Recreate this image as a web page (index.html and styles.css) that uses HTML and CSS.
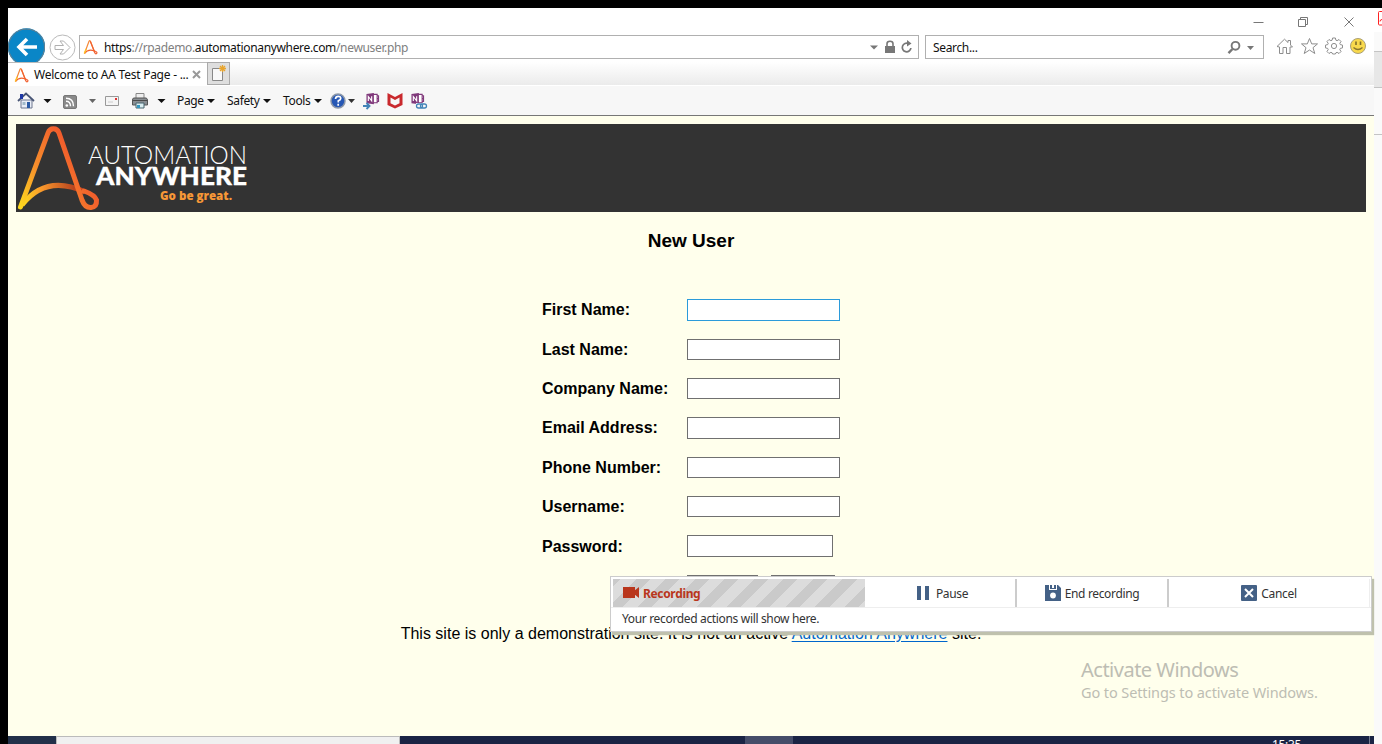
FILE: index.html
```html
<!DOCTYPE html>
<html lang="en">
<head>
<meta charset="utf-8">
<title>New User</title>
<link rel="stylesheet" href="styles.css">
</head>
<body>
<svg class="defs" width="0" height="0">
  <defs>
    <linearGradient id="flame" gradientUnits="userSpaceOnUse" x1="0" y1="84" x2="72" y2="42">
      <stop offset="0" stop-color="#ffe11c"/><stop offset=".45" stop-color="#f7902c"/><stop offset="1" stop-color="#f0532c"/>
    </linearGradient>
    <linearGradient id="arc" gradientUnits="userSpaceOnUse" x1="5" y1="80" x2="82" y2="70">
      <stop offset="0" stop-color="#ffe01e"/><stop offset=".3" stop-color="#f8962c"/><stop offset=".7" stop-color="#b8451f"/><stop offset="1" stop-color="#f4562c"/>
    </linearGradient>
    <symbol id="aa" viewBox="0 0 16 16">
      <path d="M1.500 14.500 6 2.200Q6.700 1 7.400 2.200L11.500 13" fill="none" stroke="#f58a3c" stroke-width="1.200"/>
      <path d="M7.300 2.200 11.400 12.500M1.500 14.500Q5 9.800 11 11.800Q15 13 13.600 14.600Q12 15.500 11 11.500" fill="none" stroke="#f2602f" stroke-width="1.200"/>
      <path d="M1.300 14.600 3.200 10" stroke="#ffc526" stroke-width="1.400"/>
    </symbol>
    <symbol id="onenote" viewBox="0 0 15 14">
      <path d="M7 1.500h5.500v9H7M12.500 3H14v6h-1.500M12 6h2" fill="#fff" stroke="#80397b" stroke-width="1.200"/>
      <path d="M1 1 9 0v12L1 11z" fill="#80397b"/>
      <path d="M3 8.500V3.800l3.600 4.700V3.500" fill="none" stroke="#fff" stroke-width="1.200"/>
    </symbol>
  </defs>
</svg>
<div class="screen">
  <div class="window">
    <div class="captions">
      <svg width="118" height="14"><path d="M5.500 7.500h10" stroke="#777"/><path d="M50.500 4.500h7v7h-7zM52.500 4V2.500h7v7H58" fill="none" stroke="#777"/><path d="m96.500 2.500 9 9m0-9-9 9" stroke="#777"/></svg>
    </div>
    <div class="nav">
      <svg class="back" width="38" height="35" viewBox="0 0 38 35"><circle cx="19.500" cy="19" r="18.700" fill="#0a86c7"/><circle cx="19.500" cy="19" r="18" fill="none" stroke="#6a7f8c"/><path d="M30 19H13M20 11l-8 8 8 8" fill="none" stroke="#fff" stroke-width="3.600"/></svg>
      <svg class="forward" width="27" height="27" viewBox="0 0 27 27"><circle cx="13.500" cy="13.500" r="12.500" fill="#fff" stroke="#bababa"/><path d="M6 11.500h8.500L11 7h3.500l6.500 6.500-6.500 6.500H11l3.500-4.500H6z" fill="#fff" stroke="#b0b0b0"/></svg>
      <div class="box address">
        <svg width="16" height="16"><use href="#aa"/></svg>
        <span class="url">https<i>://rpademo.</i>automationanywhere.com<i>/newuser.php</i></span>
        <svg class="tools" width="46" height="16" viewBox="0 0 46 16"><path d="M1 6.500h8L5 10.500z" fill="#777"/><path d="M16 7h10v7H16z" fill="#777"/><path d="M18 7V4.700q0-2.500 3-2.500t3 2.500V7" fill="none" stroke="#777" stroke-width="1.600"/><path d="M39.500 4.600a4.300 4.300 0 1 0 2.400 4.400" fill="none" stroke="#777" stroke-width="1.700"/><path d="m38 1 4.500 3.600L38 7.500z" fill="#777"/></svg>
      </div>
      <div class="box search"><span>Search...</span>
        <svg width="28" height="16" viewBox="0 0 28 16"><circle cx="8.500" cy="6.800" r="3.900" fill="none" stroke="#777" stroke-width="1.900"/><path d="m5.500 10-4 4.200" stroke="#777" stroke-width="2.400"/><path d="M20 7h7l-3.500 4z" fill="#777"/></svg>
      </div>
      <svg class="actions" width="92" height="18" viewBox="0 0 92 18" fill="none" stroke="#8d8d8d">
        <path d="m1 9.500 7.500-7.300L12 5.500v-2h2.500V8L16.500 10H14v6.500h-3.500v-6H7v6H3.500V10z"/>
        <path d="m33.500 1.500 2.200 5.400h5.800l-4.500 3.800 1.800 5.800-5.300-3.500-5.300 3.500 1.800-5.800-4.500-3.800h5.800z"/>
        <path d="m56.600 1 2.800 0 .5 2.200 1.200.5 1.900-1.200 2 2-1.200 1.900.5 1.200 2.200.5v2.800l-2.200.5-.5 1.200 1.200 1.900-2 2-1.900-1.200-1.200.5-.5 1.200h-2.800l-.5-1.200-1.200-.5-1.900 1.200-2-2 1.200-1.900-.5-1.200-2.200-.5V8.100l2.200-.5.500-1.200-1.200-1.900 2-2 1.900 1.200 1.200-.5z"/><circle cx="58" cy="9" r="2.600"/>
        <circle cx="82" cy="9" r="7.500" fill="#f9d94c" stroke="#aaa078"/><path d="M80 4.500V8M84.500 4.500V8" stroke="#806d28" stroke-width="1.600"/><path d="M77.500 10.500q4.500 4 9 0" stroke="#8a762d" stroke-width="1.200"/>
      </svg>
    </div>
    <div class="tabs">
      <div class="tab"><svg width="16" height="16"><use href="#aa"/></svg><span>Welcome to AA Test Page - ...</span><svg width="9" height="9"><path d="m1 1 7 7m0-7-7 7" stroke="#999" stroke-width="2"/></svg></div>
      <div class="newtab"><svg width="18" height="18" viewBox="0 0 18 18"><path d="M2.500 3.500h10v12h-10z" fill="#f8f8f8" stroke="#888"/><path d="M12.500 0v7M9 3.500h7M10 1l5 5m0-5-5 5" stroke="#e8a52f" stroke-width="1.300"/></svg></div>
    </div>
    <div class="commands">
      <svg width="163" height="18" viewBox="0 0 163 18">
        <path d="M4 8h11v8H4z" fill="#e9edf6" stroke="#6f7890"/><path d="m1 9 8-7.500L17 9" fill="none" stroke="#485575" stroke-width="1.800"/><path d="M3 2h3v5H3z" fill="#1e37a6"/><path d="M10 10h3v6h-3z" fill="#2c5ba5"/><path d="M5.500 10h3v3h-3z" fill="#a2baca"/>
        <path d="M26.500 7h8l-4 4z" fill="#111"/>
        <rect x="46.500" y="3.500" width="13" height="13" rx="1.500" fill="#8a8a8a" stroke="#777"/><circle cx="49.800" cy="13.500" r="1.300" fill="#fff"/><path d="M49 9.300q4.500 0 4.500 5M49 6.300q7.500 0 7.500 8" fill="none" stroke="#fff" stroke-width="1.400"/>
        <path d="M72 7h7l-3.500 4z" fill="#666"/>
        <path d="M88.500 4.500h13v9h-13z" fill="#f5f5f5" stroke="#999"/><path d="M98 6h2v2h-2z" fill="#d33"/><path d="M91 10h5" stroke="#ccc"/>
        <path d="M119 1.500h8v5h-8z" fill="#eee" stroke="#888"/><path d="M117 6h12q1 0 1.500 2v5h-15V8q0-2 1.500-2z" fill="#8a8f93" stroke="#555"/><path d="M116 8.500h14" stroke="#4b4b4b"/><path d="M119 11h8v5h-8z" fill="#d9edf0" stroke="#49656e"/><path d="M120 13h3v3h-3z" fill="#3598bf"/>
        <path d="M140.500 7h8l-4 4z" fill="#111"/>
      </svg>
      <span class="menu page-menu">Page<b></b></span><span class="menu safety">Safety<b></b></span><span class="menu toolsmenu">Tools<b></b></span>
      <svg width="100" height="18" viewBox="0 0 100 18">
        <circle cx="8" cy="9" r="7" fill="#2758b5" stroke="#8d98a8" stroke-width="1.500"/><path d="M5.500 7q.2-2.600 2.700-2.600 2.700 0 2.500 2.200-.2 1.400-2.400 2.200v1.600M8.200 11.800v2" fill="none" stroke="#fff" stroke-width="1.700"/>
        <path d="M18 7h7l-3.500 4z" fill="#333"/><use href="#onenote" x="35" y="1" width="15" height="13"/><path d="M33 14h6M36.500 11l3 3-3 3" fill="none" stroke="#4384b8" stroke-width="1.900"/>
        <path d="m57.500 1 7.500 4 7.500-4v12L65 16.500 57.500 13zM60.500 5.500v5.800l4.500 2.200 4.500-2.200V5.500L65 8z" fill="#c9292d" fill-rule="evenodd"/>
        <use href="#onenote" x="80" y="1" width="15" height="13"/><path d="M86 11h11v6H86z" fill="#f7f7f7"/><rect x="86.500" y="12" width="6" height="4" rx="2" fill="none" stroke="#4384b8" stroke-width="1.300"/><rect x="90.500" y="12" width="6" height="4" rx="2" fill="none" stroke="#4384b8" stroke-width="1.300"/>
      </svg>
    </div>
    <main>
      <header class="banner">
        <svg width="240" height="88" viewBox="0 0 240 88">
          <path d="M6 81Q30 50 69 68" fill="none" stroke="url(#arc)" stroke-width="5"/>
          <path d="M4.500 83 32 9Q33.500 4.700 37.500 4.700T43 9L66 76Q69 84 75 83.500T80.500 76Q79 71 68 67" fill="none" stroke="url(#flame)" stroke-width="5" stroke-linecap="round"/>
          <text x="72" y="39.500" textLength="159" lengthAdjust="spacingAndGlyphs" class="thin">AUTOMATION</text>
          <text x="80" y="61" textLength="151" lengthAdjust="spacingAndGlyphs" class="heavy">ANYWHERE</text>
          <text x="144" y="76" textLength="72" lengthAdjust="spacingAndGlyphs" class="tag">Go be great.</text>
        </svg>
      </header>
      <h3>New User</h3>
      <form>
        <label>First Name:</label><input class="focused">
        <label>Last Name:</label><input>
        <label>Company Name:</label><input>
        <label>Email Address:</label><input class="tall">
        <label>Phone Number:</label><input>
        <label>Username:</label><input>
        <label>Password:</label><input class="short" type="password">
        <span></span><div class="buttons"><button type="button"></button><button type="button"></button></div>
      </form>
      <p>This site is only a demonstration site. It is not an active <a href="#">Automation Anywhere</a> site.</p>
    </main>
    <div class="taskbar"><div class="start"></div><div class="find"></div><div class="active"></div><time>15:35</time><div class="peek"></div></div>
  </div>
  <div class="sliver"><div class="s1"><svg width="8" height="20"><path d="M8 3.500H5.500q-1 0-1 1V16q0 1 1 1H8" fill="none" stroke="#f22"/><path d="M8 11.500q-2 0-2 2" fill="none" stroke="#f22"/></svg></div><div class="s2"></div><div class="s3"></div><div class="s4"></div></div>
</div>
<div class="recorder">
  <div class="controls">
    <div class="rec"><svg width="17" height="12"><path d="M0 0h12v11H0zM11 4l5-4v11l-5-4z" fill="#b9361c"/></svg><span>Recording</span></div>
    <div class="ctl"><svg width="12" height="14"><path d="M0 0h4v14H0zM8 0h4v14H8z" fill="#446186"/></svg><span class="pause">Pause</span></div>
    <div class="ctl"><svg width="16" height="16"><path d="M0 0h4v5h8V0h1l3 3v13H0z" fill="#446186"/><path d="M5 0h2v3h2V0h2v4H5z" fill="#446186"/><circle cx="8" cy="10.500" r="2.900" fill="#fff"/></svg><span class="end">End recording</span></div>
    <div class="ctl last"><svg width="16" height="16"><rect width="16" height="16" rx="1" fill="#446186"/><path d="m4 4 8 8m0-8-8 8" stroke="#fff" stroke-width="2"/></svg><span class="cancel">Cancel</span></div>
  </div>
  <div class="status"><span>Your recorded actions will show here.</span></div>
</div>
<div class="activate"><strong>Activate Windows</strong><span>Go to Settings to activate Windows.</span></div>
</body>
</html>
```
FILE: styles.css
```css
* { box-sizing: border-box; }
body { margin: 0; background: #000; font: 12px "Noto Sans", sans-serif; letter-spacing: -.34px; color: #111; width: 1382px; height: 744px; overflow: hidden; }
svg { display: block; flex: none; }
.defs { position: absolute; }
.screen { display: grid; grid-template-columns: 1366px 8px; height: 744px; padding: 8px 0 0 8px; }
.window { display: grid; grid-template-rows: 20px 34px 24px 30px 620px 8px; background: #fff; overflow: hidden; }
.captions { display: flex; justify-content: flex-end; padding: 7px 8px 0 0; }
.nav { display: flex; height: 34px; white-space: nowrap; }
.back { width: 38px; margin-right: 4px; margin-left: -1px; }
.forward { margin: 6px 3px 0 0; }
.box { height: 24px; border: 1px solid #b0b0b0; margin-top: 7px; display: flex; align-items: center; background: #fff; }
.address { width: 840px; padding: 0 3px 0 3px; }
.url { margin-left: 5px; padding-top: 1px; }
.url i { font-style: normal; color: #808080; }
.tools { margin-left: auto; }
.search { width: 339px; margin-left: 6px; padding: 0 8px 0 7px; justify-content: space-between; }
.search span { padding-top: 1px; }
.actions { margin: 9px 0 0 12px; }
.tabs { display: flex; background: linear-gradient(#fff, #ebebeb); border-bottom: 1px solid #fff; white-space: nowrap; }
.tab { width: 199px; background: #fff; border-top: 1px solid #bbb; display: flex; align-items: center; padding: 1px 6px 0 6px; letter-spacing: -.25px; }
.tab span { margin-left: 4px; margin-right: auto; }
.newtab { width: 23px; border: 1px solid #aaa; background: #dedede; padding: 2px; }
.commands { display: flex; align-items: center; background: #f7f7f7; border-bottom: 1px solid #777; padding-left: 9px; white-space: nowrap; }
.menu { display: flex; align-items: center; }
.menu b { margin-left: auto; border: 4px solid transparent; border-top-color: #111; border-bottom: 0; }
.page-menu { width: 38px; margin-right: 12px; margin-left: -3px; }
.safety { width: 44px; margin-right: 12px; }
.toolsmenu { width: 39px; margin-right: 8px; }
main { background: #ffffec; padding: 8px; font: 16px "Liberation Sans", sans-serif; letter-spacing: 0; color: #000; }
.banner { background: #333; height: 88px; }
.thin { font: 300 26px Lato, sans-serif; fill: #fff; letter-spacing: 0; }
.heavy { font: 900 24px Lato, sans-serif; fill: #fff; stroke: #fff; stroke-width: .3px; letter-spacing: 0; }
.tag { font: 800 12px "Open Sans", sans-serif; fill: #f79837; letter-spacing: 0; }
h3 { margin: 19px 0 0; height: 22px; font-size: 19px; line-height: 20px; text-align: center; }
form { display: grid; grid-template-columns: 145px 153px; grid-template-rows: 40px 39px 39px 40px 39px 39px 40px 39px; margin: 46px 0 0 526px; }
label { font-weight: 700; line-height: 21px; }
label:nth-of-type(7) { padding-top: 1px; }
input { width: 153px; height: 21px; border: 1px solid #707070; background: #fff; padding: 0; margin: 0; outline: 0; border-radius: 0; }
input.focused { border-color: #2b9bda; height: 22px; }
input.tall { height: 22px; }
input.short { width: 146px; height: 22px; }
.buttons { display: flex; gap: 13px; }
button { height: 22px; width: 71px; padding: 0; border: 1px solid #707070; background: #e3e3e3; }
button + button { width: 64px; }
form + p { margin: 10px 0 0; line-height: 20px; text-align: center; letter-spacing: .01px; }
a { color: #0066cc; text-underline-offset: 2px; }
.taskbar { display: flex; background: #1a2444; }
.start { width: 48px; background: #223049; }
.find { width: 344px; background: #f0f0f0; border: 1px solid #bbb; border-bottom: 0; }
.active { width: 48px; margin-left: 345px; background: #454d69; }
time { color: #fff; margin-left: 479px; width: 40px; height: 8px; overflow: hidden; line-height: 18px; }
.peek { width: 1px; margin-left: auto; margin-right: 4px; background: #737b90; }
.sliver { display: grid; grid-template-rows: 24px 20px 36px 47px 1fr; background: #fafafa; width: 8px; }
.s1 { background: #fff; overflow: hidden; }
.s2 { border-bottom: 1px solid #c4c4c4; }
.s3 { background: #e7e7e7; border-bottom: 1px solid #c4c4c4; }
.s4 { border-bottom: 1px solid #c4c4c4; }
.recorder { position: absolute; left: 610px; top: 576px; width: 762px; height: 56px; background: #fff; border: 1px solid #ccc; box-shadow: 2px 3px 1px #bfc1ad; white-space: nowrap; color: #333; }
.controls { display: grid; grid-template-columns: 252px 152px 152px 201px; height: 31px; padding: 2px 0 0 2px; border-bottom: 1px solid #eee; }
.rec { display: flex; align-items: center; padding-left: 10px; color: #b9361c; font-weight: 700; background: repeating-linear-gradient(135deg, #cacaca 0 5.400px, #dcdcdc 5.400px 16.300px, #cacaca 16.300px 20.900px); }
.rec span { margin-left: 3px; }
.ctl { display: flex; align-items: center; justify-content: center; border-right: 2px solid #ccc; }
.ctl.last { border-right: 1px solid #eee; }
.ctl span { margin-left: 4px; padding-top: 1px; }
.ctl .pause { margin-left: 7px; margin-right: -5px; }
.status { padding: 2px 0 0 11px; line-height: 18px; }
.activate { position: absolute; left: 1081px; top: 657px; color: #bdbdb3; display: grid; white-space: nowrap; }
.activate strong { font-size: 20px; font-weight: 400; line-height: 26px; letter-spacing: -.5px; }
.activate span { font-size: 14.500px; line-height: 19px; letter-spacing: -.1px; }
```
